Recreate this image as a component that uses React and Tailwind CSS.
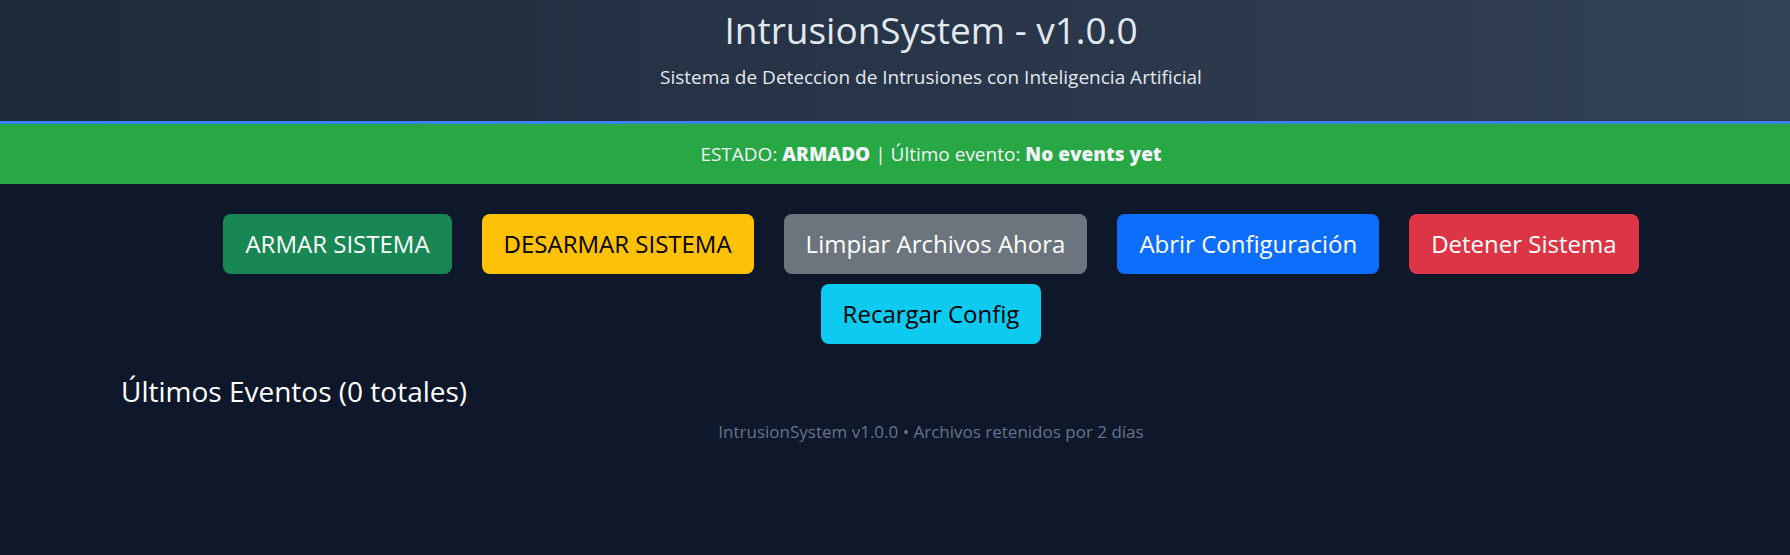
import React from 'react';

const buttons = [
  { label: 'ARMAR SISTEMA', cls: 'bg-[#198754] text-white' },
  { label: 'DESARMAR SISTEMA', cls: 'bg-[#ffc107] text-black' },
  { label: 'Limpiar Archivos Ahora', cls: 'bg-[#6c757d] text-white' },
  { label: 'Abrir Configuración', cls: 'bg-[#0d6efd] text-white' },
  { label: 'Detener Sistema', cls: 'bg-[#dc3545] text-white' },
  { label: 'Recargar Config', cls: 'bg-[#0dcaf0] text-black' },
];

const App = () => {
  return (
    <div className="min-h-screen bg-[#0f172a] font-['Open_Sans',sans-serif]">
      {/* Header */}
      <div className="h-[124px] bg-gradient-to-r from-[#1e293b] to-[#334155] border-b-[3px] border-[#3b82f6] pl-[121px] pr-[49px] pt-[8px] flex flex-col items-center">
        <h1 className="text-[37px] leading-[1.2] text-[#e2e8f0]">IntrusionSystem - v1.0.0</h1>
        <p className="mt-[11px] text-[19px] leading-[1.5] text-[#e2e8f0]">
          Sistema de Deteccion de Intrusiones con Inteligencia Artificial
        </p>
      </div>

      {/* Status bar */}
      <div className="h-[60px] bg-[#28a745] flex items-center justify-center pl-[121px] pr-[49px] text-[19px] text-[#f1f5f9]">
        <span>
          ESTADO: <strong className="font-extrabold">ARMADO</strong> | Último evento:{' '}
          <strong className="font-extrabold">No events yet</strong>
        </span>
      </div>

      {/* Main */}
      <div className="pl-[121px] pr-[49px] pt-[30px]">
        <div className="flex flex-wrap justify-center gap-x-[30px] gap-y-[10px]">
          {buttons.map((b) => (
            <button
              key={b.label}
              className={`h-[60px] px-[22px] rounded-[8px] text-[24px] leading-none ${b.cls}`}
            >
              {b.label}
            </button>
          ))}
        </div>

        <h3 className="mt-[31px] text-[28px] leading-[1.2] text-white">Últimos Eventos (0 totales)</h3>

        <p className="mt-[10px] text-center text-[17px] leading-[1.5] text-[#64748b]">
          IntrusionSystem v1.0.0 • Archivos retenidos por 2 días
        </p>
      </div>
    </div>
  );
};

export default App;
